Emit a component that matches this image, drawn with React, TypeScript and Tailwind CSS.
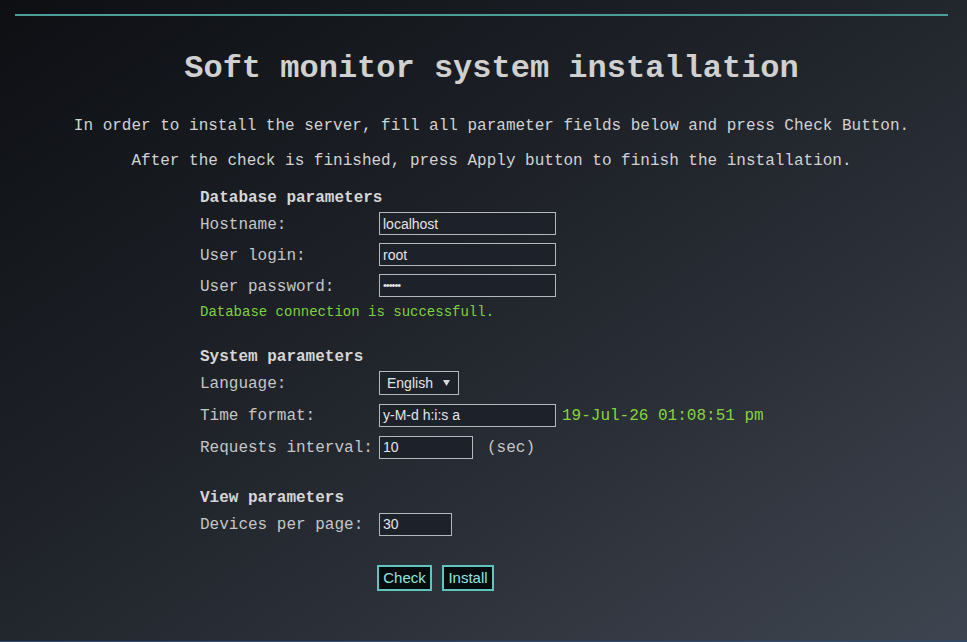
import React from "react";

const mono = { fontFamily: '"Liberation Mono", "Courier New", monospace' };
const sans = { fontFamily: '"Liberation Sans", Arial, sans-serif' };

function Field({ value, w, password }: { value: string; w: string; password?: boolean }) {
  return (
    <div
      className={`h-[23px] ${w} border border-[#b4b8bd] bg-[#1d222a] text-[14px] text-[#e4e4e4] flex items-center pl-[3px] leading-none`}
      style={sans}
    >
      {password ? <span className="tracking-[-1px] text-[11px]">••••••</span> : value}
    </div>
  );
}

function Row({ label, children, h = "h-[31px]" }: { label: string; children: React.ReactNode; h?: string }) {
  return (
    <div className={`flex items-center ${h}`}>
      <div className="w-[179px] shrink-0 pt-[2px] text-[16px] text-[#c6c6c6]">{label}</div>
      {children}
    </div>
  );
}

function Header({ text }: { text: string }) {
  return <div className="h-[24px] pt-[3px] flex items-center text-[16px] font-bold text-[#d6d6d6]">{text}</div>;
}

export default function App() {
  return (
    <div
      className="w-[967px] h-[642px] overflow-hidden bg-gradient-to-br from-[#0d0f13] via-[#22262d] to-[#3f4550] border-b border-[#2c4d78] flex flex-col"
      style={mono}
    >
      <div className="pt-[14px] pl-[15px] pr-[19px]">
        <div className="h-[2px] bg-[#4c9f98]" />
      </div>
      <div className="pl-[16px]">
        <div className="mt-[33px] h-[40px] flex items-center justify-center text-[32px] font-bold text-[#d0d0d0]">
          Soft monitor system installation
        </div>
        <div className="mt-[27px] h-[20px] flex items-center justify-center text-[16px] text-[#d2d2d2] whitespace-pre">
          In order to install the server, fill all parameter fields below and press Check Button.
        </div>
        <div className="mt-[15px] h-[20px] flex items-center justify-center text-[16px] text-[#d2d2d2] whitespace-pre">
          After the check is finished, press Apply button to finish the installation.
        </div>

        <div className="ml-[184px] mt-[13px] flex flex-col">
          <Header text="Database parameters" />
          <Row label="Hostname:">
            <Field value="localhost" w="w-[177px]" />
          </Row>
          <Row label="User login:">
            <Field value="root" w="w-[177px]" />
          </Row>
          <Row label="User password:">
            <Field value="" w="w-[177px]" password />
          </Row>
          <div className="h-[20px] pt-[2px] flex items-center text-[14px] text-[#7ed23e]">
            Database connection is successfull.
          </div>

          <div className="mt-[22px]">
            <Header text="System parameters" />
          </div>
          <Row label="Language:" h="h-[32px]">
            <div
              className="h-[24px] w-[80px] border border-[#b4b8bd] bg-[#1d222a] text-[14px] text-[#e4e4e4] flex items-center pl-[7px] pr-[8px] justify-between"
              style={sans}
            >
              <span>English</span>
              <svg width="7" height="6" viewBox="0 0 7 6">
                <path d="M0 0 H7 L3.5 6 Z" fill="#d8d8d8" />
              </svg>
            </div>
          </Row>
          <Row label="Time format:" h="h-[32px]">
            <Field value="y-M-d h:i:s a" w="w-[177px]" />
            <span className="ml-[6px] pt-[2px] text-[16px] text-[#86d43e]">19-Jul-26 01:08:51 pm</span>
          </Row>
          <Row label="Requests interval:" h="h-[32px]">
            <Field value="10" w="w-[94px]" />
            <span className="ml-[14px] pt-[2px] text-[16px] text-[#c6c6c6]">(sec)</span>
          </Row>

          <div className="mt-[21px]">
            <Header text="View parameters" />
          </div>
          <Row label="Devices per page:" h="h-[32px]">
            <Field value="30" w="w-[73px]" />
          </Row>

          <div className="mt-[25px] ml-[177px] flex gap-[10px]" style={sans}>
            <button className="h-[26px] w-[55px] border-2 border-[#5fc6bf] bg-[#060b0e] text-[15px] text-[#8fe6df] flex items-center justify-center">
              Check
            </button>
            <button className="h-[26px] w-[52px] border-2 border-[#5fc6bf] bg-[#060b0e] text-[15px] text-[#8fe6df] flex items-center justify-center">
              Install
            </button>
          </div>
        </div>
      </div>
    </div>
  );
}
